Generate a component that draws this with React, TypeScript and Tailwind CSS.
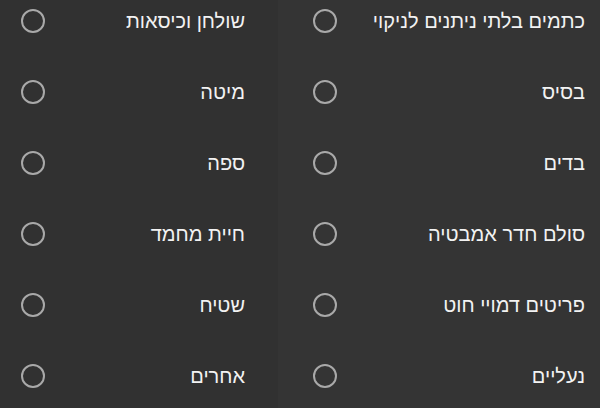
const left = ["שולחן וכיסאות", "מיטה", "ספה", "חיית מחמד", "שטיח", "אחרים"]
const right = ["כתמים בלתי ניתנים לניקוי", "בסיס", "בדים", "סולם חדר אמבטיה", "פריטים דמויי חוט", "נעליים"]

const Option = ({ label, padLeft, padRight }: { label: string; padLeft: string; padRight: string }) => (
    <label className={`h-[71px] flex items-center justify-between ${padLeft} ${padRight}`}>
        <span className="w-6 h-6 rounded-full border-2 border-[#a9a9a9] shrink-0"></span>
        <span dir="rtl" className="text-[20px] text-[#f2f2f2] whitespace-nowrap">{label}</span>
    </label>
)

export default function App() {
    return (
        <div
            className="w-[600px] h-[408px] overflow-hidden bg-[#333333] grid grid-cols-[278px_322px]"
            style={{ fontFamily: '"Liberation Sans", Arial, sans-serif' }}
        >
            <div className="flex flex-col -mt-[15px] bg-[#313131]">
                {left.map((l) => (
                    <Option key={l} label={l} padLeft="pl-[21px]" padRight="pr-[33px]" />
                ))}
            </div>
            <div className="flex flex-col -mt-[15px] bg-[#343434]">
                {right.map((r) => (
                    <Option key={r} label={r} padLeft="pl-[35px]" padRight="pr-[15px]" />
                ))}
            </div>
        </div>
    )
}
